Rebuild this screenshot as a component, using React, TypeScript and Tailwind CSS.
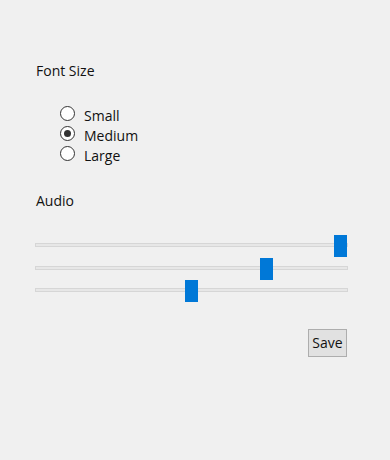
import { useState } from "react";

const sizes = ["Small", "Medium", "Large"];
const levels = [100, 75, 50];

function Slider({ value }: { value: number }) {
  // thumb travel is 299px across the 313px track
  const left = Math.ceil((value / 100) * 299);
  return (
    <div className="relative h-[22px] w-[313px] pt-[8px]">
      <div className="h-[4px] w-full border border-[#d6d6d6] bg-[#e7e7e7]" />
      <div className="absolute top-0 h-[22px] w-[13px] bg-[#0078d7]" style={{ left }} />
    </div>
  );
}

export default function App() {
  const [size, setSize] = useState("Medium");

  return (
    <div className="h-[460px] w-[390px] bg-[#f0f0f0] px-[35px] pt-[61px] font-['Open_Sans',sans-serif] text-[14px] leading-[20px] text-[#111]">
      <div className="h-5 pl-px">Font Size</div>

      <div className="mt-[25px] pl-[25px]">
        {sizes.map((s) => (
          <button key={s} type="button" onClick={() => setSize(s)} className="flex h-5 items-start gap-[9px]">
            <span className="flex h-[15px] w-[15px] items-center justify-center rounded-full border border-[#333] bg-white">
              {size === s ? <span className="h-[7px] w-[7px] rounded-full bg-[#333]" /> : null}
            </span>
            <span>{s}</span>
          </button>
        ))}
      </div>

      <div className="mt-[25px] h-5 pl-px">Audio</div>

      <div className="mt-[24px] flex flex-col">
        {levels.map((v, i) => (
          <div key={i} className={i === 1 ? "mt-px" : ""}>
            <Slider value={v} />
          </div>
        ))}
      </div>

      <div className="mt-[27px] flex w-[312px] justify-end">
        <button type="button" className="h-[28px] w-[39px] border border-[#adadad] bg-[#e1e1e1] text-[14px] leading-none text-[#111]">
          Save
        </button>
      </div>
    </div>
  );
}
